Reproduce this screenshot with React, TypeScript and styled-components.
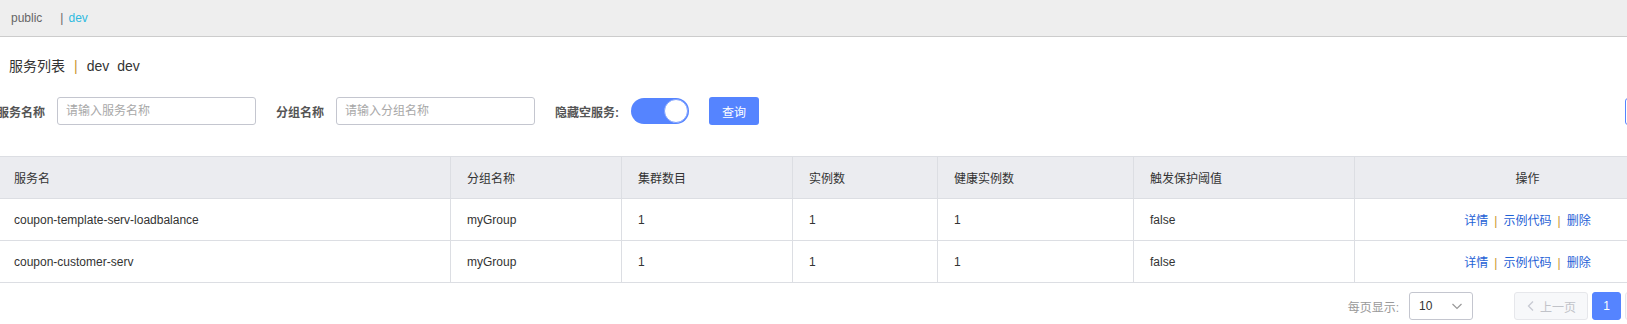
import React from 'react'
import styled, { createGlobalStyle } from 'styled-components'

type Service = {
    name: string
    group: string
    clusters: number
    instances: number
    healthy: number
    threshold: string
}

const services: Service[] = [
    { name: 'coupon-template-serv-loadbalance', group: 'myGroup', clusters: 1, instances: 1, healthy: 1, threshold: 'false' },
    { name: 'coupon-customer-serv', group: 'myGroup', clusters: 1, instances: 1, healthy: 1, threshold: 'false' },
]

const columns = [
    { title: '服务名', width: 453 },
    { title: '分组名称', width: 171 },
    { title: '集群数目', width: 171 },
    { title: '实例数', width: 145 },
    { title: '健康实例数', width: 196 },
    { title: '触发保护阈值', width: 221 },
    { title: '操作', width: 346, center: true },
]

const App: React.FC = () => {
    return (
        <>
            <GlobalStyle />
            <TopBar>
                <Namespace>public</Namespace>
                <NsSep>|</NsSep>
                <Namespace active>dev</Namespace>
            </TopBar>
            <Page>
                <Title>
                    <span>服务列表</span>
                    <TitleSep>|</TitleSep>
                    <span>dev</span>
                    <TitleNs>dev</TitleNs>
                </Title>

                <FilterRow>
                    <FilterGroup>
                        <FormItem>
                            <FormLabel>服务名称</FormLabel>
                            <TextInput placeholder="请输入服务名称" />
                        </FormItem>
                        <FormItem>
                            <FormLabel>分组名称</FormLabel>
                            <TextInput placeholder="请输入分组名称" />
                        </FormItem>
                        <FormItem>
                            <FormLabel>隐藏空服务:</FormLabel>
                            <Switch>
                                <Knob />
                            </Switch>
                        </FormItem>
                        <PrimaryButton>查询</PrimaryButton>
                    </FilterGroup>
                    <OutlineButton>创建服务</OutlineButton>
                </FilterRow>

                <Table>
                    <colgroup>
                        {columns.map(c => <col key={c.title} style={{ width: c.width }} />)}
                    </colgroup>
                    <thead>
                        <tr>
                            {columns.map(c => (
                                <Th key={c.title} center={c.center}>{c.title}</Th>
                            ))}
                        </tr>
                    </thead>
                    <tbody>
                        {services.map(s => (
                            <tr key={s.name}>
                                <Td>{s.name}</Td>
                                <Td>{s.group}</Td>
                                <Td>{s.clusters}</Td>
                                <Td>{s.instances}</Td>
                                <Td>{s.healthy}</Td>
                                <Td>{s.threshold}</Td>
                                <Td center>
                                    <ActionLink>详情</ActionLink>
                                    <ActionSep>|</ActionSep>
                                    <ActionLink>示例代码</ActionLink>
                                    <ActionSep>|</ActionSep>
                                    <ActionLink>删除</ActionLink>
                                </Td>
                            </tr>
                        ))}
                    </tbody>
                </Table>

                <Pagination>
                    <PageSizeLabel>每页显示:</PageSizeLabel>
                    <PageSelect>
                        <span>10</span>
                        <svg width="12" height="12" viewBox="0 0 12 12">
                            <path d="M1.5 4 L6 8.5 L10.5 4" fill="none" stroke="#999" strokeWidth="1.2" />
                        </svg>
                    </PageSelect>
                    <Pager>
                        <PageButton disabled>
                            <svg width="10" height="12" viewBox="0 0 10 12">
                                <path d="M7 1.5 L2.5 6 L7 10.5" fill="none" stroke="#c8cad2" strokeWidth="1.3" />
                            </svg>
                            上一页
                        </PageButton>
                        <PageNumber current>1</PageNumber>
                        <PageButton disabled>
                            下一页
                            <svg width="10" height="12" viewBox="0 0 10 12">
                                <path d="M3 1.5 L7.5 6 L3 10.5" fill="none" stroke="#c8cad2" strokeWidth="1.3" />
                            </svg>
                        </PageButton>
                    </Pager>
                </Pagination>
            </Page>
        </>
    )
}

const GlobalStyle = createGlobalStyle`
    html, body {
        margin: 0;
        padding: 0;
        background: #fff;
        overflow: hidden;
    }
    body {
        font-family: "Liberation Sans", "Noto Sans CJK SC", sans-serif;
        font-size: 12px;
        color: #333;
    }
`

const TopBar = styled.div`
    height: 36px;
    background: #eeeeee;
    border-bottom: 1px solid #cccccc;
    display: flex;
    align-items: center;
    padding-left: 11px;
    font-size: 12px;
`

const Namespace = styled.span<{ active?: boolean }>`
    color: ${p => (p.active ? '#2fbbe0' : '#666')};
`

const NsSep = styled.span`
    color: #666;
    margin: 0 5px 0 18px;
`

const Page = styled.div`
    width: 1700px;
    margin-left: -1px;
    display: flex;
    flex-direction: column;
`

const Title = styled.div`
    margin-top: 19px;
    padding-left: 10px;
    height: 20px;
    line-height: 20px;
    font-size: 14px;
    color: #333;
    display: flex;
    align-items: center;
`

const TitleSep = styled.span`
    color: #c9962e;
    margin: 0 9px 0 9px;
`

const TitleNs = styled.span`
    margin-left: 8px;
`

const FilterRow = styled.div`
    margin-top: 21px;
    margin-left: -2px;
    height: 28px;
    display: flex;
    align-items: center;
    justify-content: space-between;
`

const FilterGroup = styled.div`
    display: flex;
    align-items: center;
`

const FormItem = styled.div`
    display: flex;
    align-items: center;
    margin-right: 20px;
`

const FormLabel = styled.label`
    font-weight: bold;
    color: #555;
    margin-right: 12px;
    white-space: nowrap;
`

const TextInput = styled.input`
    box-sizing: border-box;
    width: 199px;
    height: 28px;
    border: 1px solid #c4c6cf;
    border-radius: 3px;
    padding: 0 8px;
    font-family: inherit;
    font-size: 12px;
    color: #333;
    outline: none;
    &::placeholder {
        color: #a8a8a8;
    }
`

const Switch = styled.div`
    box-sizing: border-box;
    width: 58px;
    height: 26px;
    border-radius: 13px;
    background: #5584ff;
    display: flex;
    align-items: center;
    justify-content: flex-end;
    padding-right: 1px;
`

const Knob = styled.div`
    box-sizing: border-box;
    width: 24px;
    height: 24px;
    border-radius: 50%;
    background: #fff;
    border: 1px solid #7fa2ff;
`

const PrimaryButton = styled.button`
    box-sizing: border-box;
    width: 50px;
    height: 28px;
    border: none;
    border-radius: 3px;
    background: #5584ff;
    color: #fff;
    font-family: inherit;
    font-size: 12px;
    padding: 0;
`

const OutlineButton = styled.button`
    box-sizing: border-box;
    width: 74px;
    height: 27px;
    border: 1px solid #5584ff;
    border-radius: 3px;
    background: #fff;
    color: #5584ff;
    font-family: inherit;
    font-size: 12px;
    padding: 0;
`

const Table = styled.table`
    margin-top: 31px;
    margin-left: -2px;
    width: 1703px;
    table-layout: fixed;
    border-collapse: collapse;
    border-top: 1px solid #dcdee3;
`

const Th = styled.th<{ center?: boolean }>`
    height: 41px;
    padding: 0 16px;
    background: #ebecf0;
    border: 1px solid #dcdee3;
    border-top: none;
    font-weight: normal;
    color: #333;
    text-align: ${p => (p.center ? 'center' : 'left')};
    white-space: nowrap;
`

const Td = styled.td<{ center?: boolean }>`
    height: 41px;
    padding: 0 16px;
    border: 1px solid #dcdee3;
    color: #333;
    text-align: ${p => (p.center ? 'center' : 'left')};
    white-space: nowrap;
`

const ActionLink = styled.a`
    color: #1f62d6;
    cursor: pointer;
`

const ActionSep = styled.span`
    color: #c9962e;
    margin: 0 6px;
`

const Pagination = styled.div`
    margin-top: 9px;
    display: flex;
    align-items: center;
    justify-content: flex-end;
`

const PageSizeLabel = styled.span`
    color: #999;
    margin-right: 10px;
`

const PageSelect = styled.div`
    box-sizing: border-box;
    width: 64px;
    height: 28px;
    border: 1px solid #c4c6cf;
    border-radius: 3px;
    display: flex;
    align-items: center;
    justify-content: space-between;
    padding: 0 9px;
    color: #333;
    font-size: 12px;
`

const Pager = styled.div`
    margin-left: 41px;
    display: flex;
    align-items: center;
    gap: 4px;
`

const PageButton = styled.button`
    box-sizing: border-box;
    width: 74px;
    height: 28px;
    border: 1px solid #e6e7eb;
    border-radius: 3px;
    background: #f7f8fa;
    color: #c1c3c9;
    font-family: inherit;
    font-size: 12px;
    display: flex;
    align-items: center;
    justify-content: center;
    gap: 4px;
    padding: 0;
`

const PageNumber = styled.button<{ current?: boolean }>`
    box-sizing: border-box;
    min-width: 29px;
    height: 28px;
    border: 1px solid ${p => (p.current ? '#5584ff' : '#c4c6cf')};
    border-radius: 3px;
    background: ${p => (p.current ? '#5584ff' : '#fff')};
    color: ${p => (p.current ? '#fff' : '#333')};
    font-family: inherit;
    font-size: 12px;
    padding: 0;
`

export default App
